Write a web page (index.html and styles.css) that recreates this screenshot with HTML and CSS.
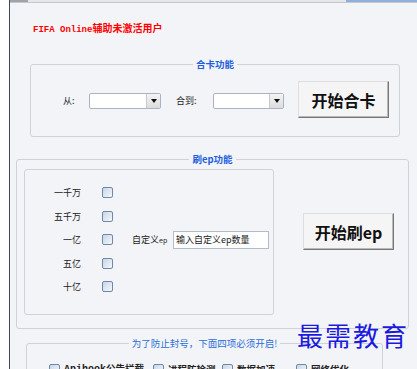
FILE: index.html
```html
<!DOCTYPE html>
<html lang="zh-CN">
<head>
    <meta charset="UTF-8">
    <meta name="viewport" content="width=device-width, initial-scale=1.0">
    <title>FIFA Online辅助</title>
    <link rel="stylesheet" href="styles.css">
</head>
<body>
    <div class="window">
        <div class="topbar"></div>
        <div class="app-title"><span class="mono">FIFA Online</span>辅助未激活用户</div>

        <fieldset class="group merge-group">
            <legend>合卡功能</legend>
            <div class="merge-row">
                <span class="from-label">从:</span>
                <div class="combo">
                    <span class="combo-field"></span>
                    <span class="combo-btn"><i class="arrow"></i></span>
                </div>
                <span class="to-label">合到:</span>
                <div class="combo combo-to">
                    <span class="combo-field"></span>
                    <span class="combo-btn"><i class="arrow"></i></span>
                </div>
                <button class="big-btn merge-btn">开始合卡</button>
            </div>
        </fieldset>

        <fieldset class="group ep-group">
            <legend>刷ep功能</legend>
            <div class="ep-body">
                <div class="ep-options">
                    <div class="opt-row">
                        <span class="opt-name">一千万</span>
                        <input type="checkbox" class="check">
                    </div>
                    <div class="opt-row">
                        <span class="opt-name">五千万</span>
                        <input type="checkbox" class="check">
                    </div>
                    <div class="opt-row">
                        <span class="opt-name">一亿</span>
                        <input type="checkbox" class="check">
                        <span class="custom-label">自定义<span class="small">ep</span></span>
                        <input type="text" class="custom-input" value="输入自定义ep数量">
                    </div>
                    <div class="opt-row">
                        <span class="opt-name">五亿</span>
                        <input type="checkbox" class="check">
                    </div>
                    <div class="opt-row">
                        <span class="opt-name">十亿</span>
                        <input type="checkbox" class="check">
                    </div>
                </div>
                <button class="big-btn ep-btn">开始刷ep</button>
            </div>
        </fieldset>

        <fieldset class="group safe-group">
            <legend>为了防止封号，下面四项必须开启!</legend>
            <div class="safe-row">
                <label class="safe-item"><input type="checkbox" class="check"><span><span class="mono">Apihook</span>公告拦截</span></label>
                <label class="safe-item"><input type="checkbox" class="check"><span>进程防检测</span></label>
                <label class="safe-item"><input type="checkbox" class="check"><span>数据加速</span></label>
                <label class="safe-item"><input type="checkbox" class="check"><span>网络优化</span></label>
            </div>
        </fieldset>

        <div class="watermark">最需教育</div>
    </div>
</body>
</html>
```

FILE: styles.css
```css
html, body {
    margin: 0;
    padding: 0;
    height: 369px;
    overflow: hidden;
    background-color: #fff;
}

body {
    font-family: "Noto Sans CJK SC", "Liberation Sans", sans-serif;
    font-size: 9px;
    color: #222;
}

.window {
    position: relative;
    margin-left: 9px;
    height: 369px;
    border-left: 1px solid #3e4b5c;
    background-color: #f3f4f7;
    overflow: hidden;
}

.topbar {
    height: 2px;
    border-bottom: 1px solid #c4c8cd;
    background: linear-gradient(to right, #9ea4aa 0, #9ea4aa 18px, #e4e6e9 18px, #e4e6e9 336px, #8fb0d8 336px);
}

.mono {
    font-family: "Liberation Mono", monospace;
}

.app-title {
    margin: 19px 0 0 23px;
    font-size: 10px;
    line-height: 12px;
    font-weight: bold;
    color: #ff0000;
}

.app-title .mono {
    font-size: 9px;
}

/* group boxes */
.group {
    box-sizing: border-box;
    min-width: 0;
    padding: 0;
    border: 1px solid #cfd2d7;
    border-radius: 3px;
}

.group legend {
    margin: 0 auto;
    padding: 0 3px;
    font-size: 9.5px;
    line-height: 12px;
    font-weight: bold;
    color: #1d5fe0;
}

.merge-group {
    margin: 22px 0 0 20px;
    width: 370px;
    padding: 11px 0 18px 0;
}

.merge-row {
    display: flex;
    align-items: center;
    height: 37px;
    padding-left: 32px;
}

.from-label {
    width: 26px;
    margin-top: 2px;
}

.to-label {
    width: 37px;
    margin-left: 15px;
    margin-top: 2px;
}

.combo {
    display: flex;
    box-sizing: border-box;
    width: 72px;
    height: 16px;
    margin-top: 2px;
    border: 1px solid #a9b4c2;
    border-radius: 2px;
    background-color: #fff;
}

.combo-to {
    width: 71px;
}

.combo-field {
    flex: 1;
}

.combo-btn {
    display: flex;
    align-items: center;
    justify-content: center;
    width: 13px;
    border-left: 1px solid #c3c9d1;
    background: linear-gradient(#f4f4f4, #dcdcdc);
}

.arrow {
    width: 0;
    height: 0;
    border-left: 3px solid transparent;
    border-right: 3px solid transparent;
    border-top: 4px solid #111;
}

.big-btn {
    box-sizing: border-box;
    width: 91px;
    height: 37px;
    padding: 0;
    font-family: "Noto Sans CJK SC", "Liberation Sans", sans-serif;
    font-size: 16px;
    font-weight: bold;
    color: #111;
    background-color: #f5f5f5;
    border: 1px solid;
    border-color: #dedede #777 #777 #dedede;
    box-shadow: inset -1px -1px 0 #b9b9b9;
}

.merge-btn {
    margin-left: 14px;
}

/* ep group */
.ep-group {
    margin: 16px 0 0 6px;
    width: 393px;
    padding: 4px 0 13px 0;
}

.ep-body {
    display: flex;
    align-items: flex-start;
    padding-left: 7px;
}

.ep-options {
    box-sizing: border-box;
    width: 250px;
    height: 146px;
    padding-top: 11px;
    border: 1px solid #cfd2d7;
    border-radius: 3px;
}

.opt-row {
    display: flex;
    align-items: center;
    height: 23.5px;
}

.opt-name {
    width: 56px;
    text-align: right;
    font-size: 9px;
}

.check {
    appearance: none;
    box-sizing: border-box;
    width: 11px;
    height: 11px;
    margin: 0;
    border: 1px solid #7088a8;
    border-radius: 2px;
    background: linear-gradient(135deg, #c9d6e7, #f4f7fb);
}

.opt-row .check {
    margin-left: 21px;
}

.custom-label {
    width: 41px;
    margin-left: 19px;
}

.small {
    font-size: 7px;
}

.custom-input {
    box-sizing: border-box;
    width: 96px;
    height: 18px;
    margin: 0;
    padding: 0 2px;
    font-family: "Noto Sans CJK SC", sans-serif;
    font-size: 9px;
    color: #222;
    border: 1px solid #b3bdc9;
    background-color: #fff;
    outline: none;
}

.ep-btn {
    margin: 44px 0 0 29px;
}

/* safety group */
.safe-group {
    margin: 8px 0 0 16px;
    width: 357px;
    height: 60px;
    padding: 14px 0 0 0;
}

.safe-group legend {
    font-weight: normal;
    color: #2a6ed8;
}

.safe-row {
    display: grid;
    grid-template-columns: 104px 69px 74px auto;
    align-items: center;
    padding-left: 22px;
}

.safe-item {
    display: flex;
    align-items: center;
    gap: 4px;
    font-size: 9.5px;
    font-weight: bold;
    line-height: 11px;
}

.safe-item .mono {
    font-size: 10px;
}

.watermark {
    position: absolute;
    left: 287px;
    top: 322px;
    font-size: 26px;
    line-height: 1;
    letter-spacing: 2px;
    color: #1b1bdf;
}
```
